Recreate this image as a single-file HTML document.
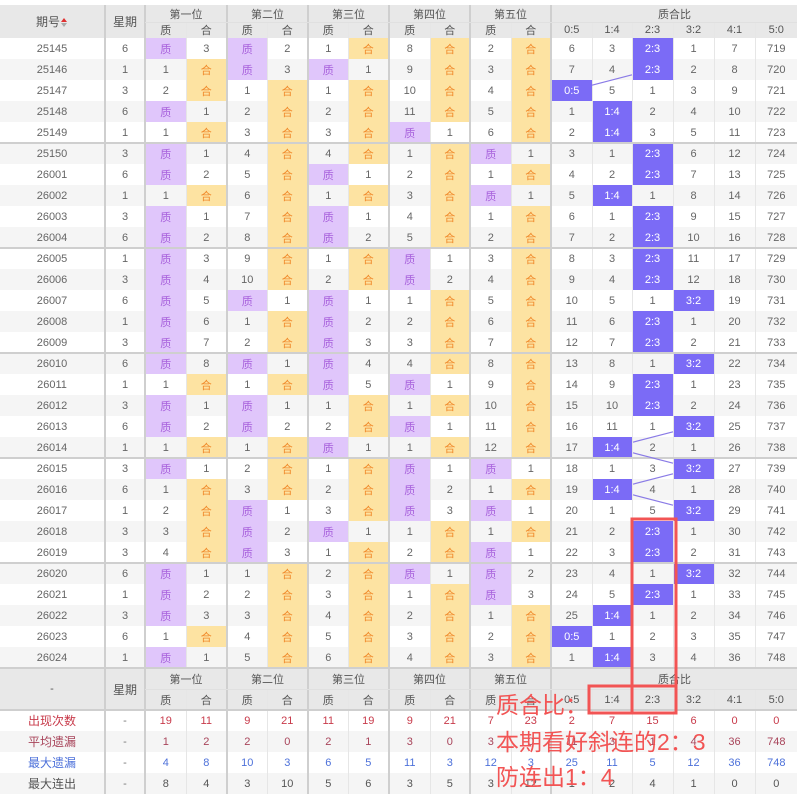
<!DOCTYPE html>
<html><head><meta charset="utf-8"><style>
body{margin:0;width:797px;height:795px;background:#fff;position:relative;overflow:hidden;font-family:"Liberation Sans","Noto Sans CJK SC",sans-serif}
table{position:absolute;left:0;top:5px;border-collapse:collapse;table-layout:fixed;width:797px}
td{padding:0;height:21px;text-align:center;font-size:11px;color:#666;border-left:1px solid #e6e6e6;white-space:nowrap;overflow:hidden}
td.g{border-left:2px solid #cfcfcf}
tr.hd td{background:#e8e8e8;color:#555}
tr.h1 td{height:17px}
tr.h2 td{height:16px}
tr.e td{background:#f5f5f5}
tr td.p{background:#e0c6fb;color:#a861dc}
tr td.h{background:#fde3a2;color:#f0892a}
tr td.r{background:#7b6bf6;color:#fff}
td.hp{font-size:12px}
.c1 td{color:#c83a4a}
.c2 td{color:#a8445a}
.c3 td{color:#4d71da}
.c4 td{color:#555}
.c1 td.lb,.c2 td.lb,.c3 td.lb,.c4 td.lb{font-size:12px}
.dash{color:#777!important}
svg{position:absolute;left:0;top:0}
.ann{position:absolute;left:496px;color:#f25454;font-size:23px;line-height:23px;font-family:"Liberation Sans","Noto Sans CJK SC",sans-serif;white-space:nowrap}
.arr{display:inline-block;vertical-align:middle;margin-left:1px;width:7px;height:9px;position:relative}
.arr:before{content:"";position:absolute;left:0;top:0;border-left:3.5px solid transparent;border-right:3.5px solid transparent;border-bottom:4px solid #e03030}
.arr:after{content:"";position:absolute;left:0;top:5px;border-left:3.5px solid transparent;border-right:3.5px solid transparent;border-top:4px solid #aaa}
</style></head><body>
<table>
<colgroup><col style="width:105px"><col style="width:40px"><col style="width:41px"><col style="width:41px"><col style="width:40px"><col style="width:41px"><col style="width:40px"><col style="width:41px"><col style="width:41px"><col style="width:40px"><col style="width:41px"><col style="width:40px"><col style="width:41px"><col style="width:40px"><col style="width:41px"><col style="width:41px"><col style="width:41px"><col style="width:42px"></colgroup>
<tr class="hd h1"><td rowspan="2" class="hp" style="border-left:none">期号<span class="arr"></span></td><td rowspan="2" class="g hp">星期</td><td colspan="2" class="g">第一位</td><td colspan="2" class="g">第二位</td><td colspan="2" class="g">第三位</td><td colspan="2" class="g">第四位</td><td colspan="2" class="g">第五位</td><td colspan="6" class="g">质合比</td></tr>
<tr class="hd h2"><td class="g">质</td><td>合</td><td class="g">质</td><td>合</td><td class="g">质</td><td>合</td><td class="g">质</td><td>合</td><td class="g">质</td><td>合</td><td class="g">0:5</td><td>1:4</td><td>2:3</td><td>3:2</td><td>4:1</td><td>5:0</td></tr>
<tr><td style="border-left:none">25145</td><td class="g">6</td><td class="g p">质</td><td>3</td><td class="g p">质</td><td>2</td><td class="g">1</td><td class="h">合</td><td class="g">8</td><td class="h">合</td><td class="g">2</td><td class="h">合</td><td class="g">6</td><td>3</td><td class="r">2:3</td><td>1</td><td>7</td><td>719</td></tr>
<tr class="e"><td style="border-left:none">25146</td><td class="g">1</td><td class="g">1</td><td class="h">合</td><td class="g p">质</td><td>3</td><td class="g p">质</td><td>1</td><td class="g">9</td><td class="h">合</td><td class="g">3</td><td class="h">合</td><td class="g">7</td><td>4</td><td class="r">2:3</td><td>2</td><td>8</td><td>720</td></tr>
<tr><td style="border-left:none">25147</td><td class="g">3</td><td class="g">2</td><td class="h">合</td><td class="g">1</td><td class="h">合</td><td class="g">1</td><td class="h">合</td><td class="g">10</td><td class="h">合</td><td class="g">4</td><td class="h">合</td><td class="g r">0:5</td><td>5</td><td>1</td><td>3</td><td>9</td><td>721</td></tr>
<tr class="e"><td style="border-left:none">25148</td><td class="g">6</td><td class="g p">质</td><td>1</td><td class="g">2</td><td class="h">合</td><td class="g">2</td><td class="h">合</td><td class="g">11</td><td class="h">合</td><td class="g">5</td><td class="h">合</td><td class="g">1</td><td class="r">1:4</td><td>2</td><td>4</td><td>10</td><td>722</td></tr>
<tr><td style="border-left:none">25149</td><td class="g">1</td><td class="g">1</td><td class="h">合</td><td class="g">3</td><td class="h">合</td><td class="g">3</td><td class="h">合</td><td class="g p">质</td><td>1</td><td class="g">6</td><td class="h">合</td><td class="g">2</td><td class="r">1:4</td><td>3</td><td>5</td><td>11</td><td>723</td></tr>
<tr class="e"><td style="border-left:none">25150</td><td class="g">3</td><td class="g p">质</td><td>1</td><td class="g">4</td><td class="h">合</td><td class="g">4</td><td class="h">合</td><td class="g">1</td><td class="h">合</td><td class="g p">质</td><td>1</td><td class="g">3</td><td>1</td><td class="r">2:3</td><td>6</td><td>12</td><td>724</td></tr>
<tr><td style="border-left:none">26001</td><td class="g">6</td><td class="g p">质</td><td>2</td><td class="g">5</td><td class="h">合</td><td class="g p">质</td><td>1</td><td class="g">2</td><td class="h">合</td><td class="g">1</td><td class="h">合</td><td class="g">4</td><td>2</td><td class="r">2:3</td><td>7</td><td>13</td><td>725</td></tr>
<tr class="e"><td style="border-left:none">26002</td><td class="g">1</td><td class="g">1</td><td class="h">合</td><td class="g">6</td><td class="h">合</td><td class="g">1</td><td class="h">合</td><td class="g">3</td><td class="h">合</td><td class="g p">质</td><td>1</td><td class="g">5</td><td class="r">1:4</td><td>1</td><td>8</td><td>14</td><td>726</td></tr>
<tr><td style="border-left:none">26003</td><td class="g">3</td><td class="g p">质</td><td>1</td><td class="g">7</td><td class="h">合</td><td class="g p">质</td><td>1</td><td class="g">4</td><td class="h">合</td><td class="g">1</td><td class="h">合</td><td class="g">6</td><td>1</td><td class="r">2:3</td><td>9</td><td>15</td><td>727</td></tr>
<tr class="e"><td style="border-left:none">26004</td><td class="g">6</td><td class="g p">质</td><td>2</td><td class="g">8</td><td class="h">合</td><td class="g p">质</td><td>2</td><td class="g">5</td><td class="h">合</td><td class="g">2</td><td class="h">合</td><td class="g">7</td><td>2</td><td class="r">2:3</td><td>10</td><td>16</td><td>728</td></tr>
<tr><td style="border-left:none">26005</td><td class="g">1</td><td class="g p">质</td><td>3</td><td class="g">9</td><td class="h">合</td><td class="g">1</td><td class="h">合</td><td class="g p">质</td><td>1</td><td class="g">3</td><td class="h">合</td><td class="g">8</td><td>3</td><td class="r">2:3</td><td>11</td><td>17</td><td>729</td></tr>
<tr class="e"><td style="border-left:none">26006</td><td class="g">3</td><td class="g p">质</td><td>4</td><td class="g">10</td><td class="h">合</td><td class="g">2</td><td class="h">合</td><td class="g p">质</td><td>2</td><td class="g">4</td><td class="h">合</td><td class="g">9</td><td>4</td><td class="r">2:3</td><td>12</td><td>18</td><td>730</td></tr>
<tr><td style="border-left:none">26007</td><td class="g">6</td><td class="g p">质</td><td>5</td><td class="g p">质</td><td>1</td><td class="g p">质</td><td>1</td><td class="g">1</td><td class="h">合</td><td class="g">5</td><td class="h">合</td><td class="g">10</td><td>5</td><td>1</td><td class="r">3:2</td><td>19</td><td>731</td></tr>
<tr class="e"><td style="border-left:none">26008</td><td class="g">1</td><td class="g p">质</td><td>6</td><td class="g">1</td><td class="h">合</td><td class="g p">质</td><td>2</td><td class="g">2</td><td class="h">合</td><td class="g">6</td><td class="h">合</td><td class="g">11</td><td>6</td><td class="r">2:3</td><td>1</td><td>20</td><td>732</td></tr>
<tr><td style="border-left:none">26009</td><td class="g">3</td><td class="g p">质</td><td>7</td><td class="g">2</td><td class="h">合</td><td class="g p">质</td><td>3</td><td class="g">3</td><td class="h">合</td><td class="g">7</td><td class="h">合</td><td class="g">12</td><td>7</td><td class="r">2:3</td><td>2</td><td>21</td><td>733</td></tr>
<tr class="e"><td style="border-left:none">26010</td><td class="g">6</td><td class="g p">质</td><td>8</td><td class="g p">质</td><td>1</td><td class="g p">质</td><td>4</td><td class="g">4</td><td class="h">合</td><td class="g">8</td><td class="h">合</td><td class="g">13</td><td>8</td><td>1</td><td class="r">3:2</td><td>22</td><td>734</td></tr>
<tr><td style="border-left:none">26011</td><td class="g">1</td><td class="g">1</td><td class="h">合</td><td class="g">1</td><td class="h">合</td><td class="g p">质</td><td>5</td><td class="g p">质</td><td>1</td><td class="g">9</td><td class="h">合</td><td class="g">14</td><td>9</td><td class="r">2:3</td><td>1</td><td>23</td><td>735</td></tr>
<tr class="e"><td style="border-left:none">26012</td><td class="g">3</td><td class="g p">质</td><td>1</td><td class="g p">质</td><td>1</td><td class="g">1</td><td class="h">合</td><td class="g">1</td><td class="h">合</td><td class="g">10</td><td class="h">合</td><td class="g">15</td><td>10</td><td class="r">2:3</td><td>2</td><td>24</td><td>736</td></tr>
<tr><td style="border-left:none">26013</td><td class="g">6</td><td class="g p">质</td><td>2</td><td class="g p">质</td><td>2</td><td class="g">2</td><td class="h">合</td><td class="g p">质</td><td>1</td><td class="g">11</td><td class="h">合</td><td class="g">16</td><td>11</td><td>1</td><td class="r">3:2</td><td>25</td><td>737</td></tr>
<tr class="e"><td style="border-left:none">26014</td><td class="g">1</td><td class="g">1</td><td class="h">合</td><td class="g">1</td><td class="h">合</td><td class="g p">质</td><td>1</td><td class="g">1</td><td class="h">合</td><td class="g">12</td><td class="h">合</td><td class="g">17</td><td class="r">1:4</td><td>2</td><td>1</td><td>26</td><td>738</td></tr>
<tr><td style="border-left:none">26015</td><td class="g">3</td><td class="g p">质</td><td>1</td><td class="g">2</td><td class="h">合</td><td class="g">1</td><td class="h">合</td><td class="g p">质</td><td>1</td><td class="g p">质</td><td>1</td><td class="g">18</td><td>1</td><td>3</td><td class="r">3:2</td><td>27</td><td>739</td></tr>
<tr class="e"><td style="border-left:none">26016</td><td class="g">6</td><td class="g">1</td><td class="h">合</td><td class="g">3</td><td class="h">合</td><td class="g">2</td><td class="h">合</td><td class="g p">质</td><td>2</td><td class="g">1</td><td class="h">合</td><td class="g">19</td><td class="r">1:4</td><td>4</td><td>1</td><td>28</td><td>740</td></tr>
<tr><td style="border-left:none">26017</td><td class="g">1</td><td class="g">2</td><td class="h">合</td><td class="g p">质</td><td>1</td><td class="g">3</td><td class="h">合</td><td class="g p">质</td><td>3</td><td class="g p">质</td><td>1</td><td class="g">20</td><td>1</td><td>5</td><td class="r">3:2</td><td>29</td><td>741</td></tr>
<tr class="e"><td style="border-left:none">26018</td><td class="g">3</td><td class="g">3</td><td class="h">合</td><td class="g p">质</td><td>2</td><td class="g p">质</td><td>1</td><td class="g">1</td><td class="h">合</td><td class="g">1</td><td class="h">合</td><td class="g">21</td><td>2</td><td class="r">2:3</td><td>1</td><td>30</td><td>742</td></tr>
<tr><td style="border-left:none">26019</td><td class="g">3</td><td class="g">4</td><td class="h">合</td><td class="g p">质</td><td>3</td><td class="g">1</td><td class="h">合</td><td class="g">2</td><td class="h">合</td><td class="g p">质</td><td>1</td><td class="g">22</td><td>3</td><td class="r">2:3</td><td>2</td><td>31</td><td>743</td></tr>
<tr class="e"><td style="border-left:none">26020</td><td class="g">6</td><td class="g p">质</td><td>1</td><td class="g">1</td><td class="h">合</td><td class="g">2</td><td class="h">合</td><td class="g p">质</td><td>1</td><td class="g p">质</td><td>2</td><td class="g">23</td><td>4</td><td>1</td><td class="r">3:2</td><td>32</td><td>744</td></tr>
<tr><td style="border-left:none">26021</td><td class="g">1</td><td class="g p">质</td><td>2</td><td class="g">2</td><td class="h">合</td><td class="g">3</td><td class="h">合</td><td class="g">1</td><td class="h">合</td><td class="g p">质</td><td>3</td><td class="g">24</td><td>5</td><td class="r">2:3</td><td>1</td><td>33</td><td>745</td></tr>
<tr class="e"><td style="border-left:none">26022</td><td class="g">3</td><td class="g p">质</td><td>3</td><td class="g">3</td><td class="h">合</td><td class="g">4</td><td class="h">合</td><td class="g">2</td><td class="h">合</td><td class="g">1</td><td class="h">合</td><td class="g">25</td><td class="r">1:4</td><td>1</td><td>2</td><td>34</td><td>746</td></tr>
<tr><td style="border-left:none">26023</td><td class="g">6</td><td class="g">1</td><td class="h">合</td><td class="g">4</td><td class="h">合</td><td class="g">5</td><td class="h">合</td><td class="g">3</td><td class="h">合</td><td class="g">2</td><td class="h">合</td><td class="g r">0:5</td><td>1</td><td>2</td><td>3</td><td>35</td><td>747</td></tr>
<tr class="e"><td style="border-left:none">26024</td><td class="g">1</td><td class="g p">质</td><td>1</td><td class="g">5</td><td class="h">合</td><td class="g">6</td><td class="h">合</td><td class="g">4</td><td class="h">合</td><td class="g">3</td><td class="h">合</td><td class="g">1</td><td class="r">1:4</td><td>3</td><td>4</td><td>36</td><td>748</td></tr>
<tr class="hd"><td rowspan="2" style="border-left:none">-</td><td rowspan="2" class="g hp">星期</td><td colspan="2" class="g">第一位</td><td colspan="2" class="g">第二位</td><td colspan="2" class="g">第三位</td><td colspan="2" class="g">第四位</td><td colspan="2" class="g">第五位</td><td colspan="6" class="g">质合比</td></tr>
<tr class="hd"><td class="g">质</td><td>合</td><td class="g">质</td><td>合</td><td class="g">质</td><td>合</td><td class="g">质</td><td>合</td><td class="g">质</td><td>合</td><td class="g">0:5</td><td>1:4</td><td>2:3</td><td>3:2</td><td>4:1</td><td>5:0</td></tr>
<tr class="c1"><td class="lb" style="border-left:none">出现次数</td><td class="g dash">-</td><td class="g">19</td><td>11</td><td class="g">9</td><td>21</td><td class="g">11</td><td>19</td><td class="g">9</td><td>21</td><td class="g">7</td><td>23</td><td class="g">2</td><td>7</td><td>15</td><td>6</td><td>0</td><td>0</td></tr>
<tr class="c2 e"><td class="lb" style="border-left:none">平均遗漏</td><td class="g dash">-</td><td class="g">1</td><td>2</td><td class="g">2</td><td>0</td><td class="g">2</td><td>1</td><td class="g">3</td><td>0</td><td class="g">3</td><td>0</td><td class="g">11</td><td>3</td><td>1</td><td>4</td><td>36</td><td>748</td></tr>
<tr class="c3"><td class="lb" style="border-left:none">最大遗漏</td><td class="g dash">-</td><td class="g">4</td><td>8</td><td class="g">10</td><td>3</td><td class="g">6</td><td>5</td><td class="g">11</td><td>3</td><td class="g">12</td><td>3</td><td class="g">25</td><td>11</td><td>5</td><td>12</td><td>36</td><td>748</td></tr>
<tr class="c4 e"><td class="lb" style="border-left:none">最大连出</td><td class="g dash">-</td><td class="g">8</td><td>4</td><td class="g">3</td><td>10</td><td class="g">5</td><td>6</td><td class="g">3</td><td>5</td><td class="g">3</td><td>12</td><td class="g">1</td><td>2</td><td>4</td><td>1</td><td>0</td><td>0</td></tr>
</table>
<svg id="ov" width="797" height="795" viewBox="0 0 797 795">
<g stroke="#cfcfcf" stroke-width="2">
<line x1="0" y1="143" x2="797" y2="143"/><line x1="0" y1="248" x2="797" y2="248"/><line x1="0" y1="353" x2="797" y2="353"/><line x1="0" y1="458" x2="797" y2="458"/><line x1="0" y1="563" x2="797" y2="563"/><line x1="0" y1="668" x2="797" y2="668"/><line x1="0" y1="710" x2="797" y2="710"/>
</g>
<g stroke="#e0e0e0" stroke-width="1"><line x1="145" y1="22.5" x2="797" y2="22.5"/><line x1="145" y1="689.5" x2="797" y2="689.5"/></g>
<g id="ln" stroke="#8a7be6" stroke-width="1.2"></g>
<g fill="none" stroke="#f25454" stroke-width="3">
<rect x="632" y="519" width="44" height="194"/>
<rect x="589" y="686" width="87" height="27"/>
</g>
</svg>
<div class="ann" style="top:694px">质合比：</div>
<div class="ann" style="top:731px">本期看好斜连的2：3</div>
<div class="ann" style="top:766px">防连出1：4</div>
<script>
var cols=[2,2,0,1,1,2,2,1,2,2,2,2,3,2,2,3,2,2,3,1,3,1,3,2,2,3,2,1,0,1];
var xl=[551,592,632,673,714,755],w=41,h=21,g=document.getElementById('ln'),s='';
for(var i=1;i<cols.length;i++){var a=cols[i-1],b=cols[i];if(a==b)continue;
var x1=xl[a]+w/2,y1=38+21*(i-1)+10.5,x2=xl[b]+w/2,y2=38+21*i+10.5,dx=x2-x1,dy=y2-y1;
var t=Math.min(20.5/Math.abs(dx),10.5/Math.abs(dy));
s+='<line x1="'+(x1+dx*t)+'" y1="'+(y1+dy*t)+'" x2="'+(x2-dx*t)+'" y2="'+(y2-dy*t)+'"/>';}
g.innerHTML=s;
</script>
</body></html>
